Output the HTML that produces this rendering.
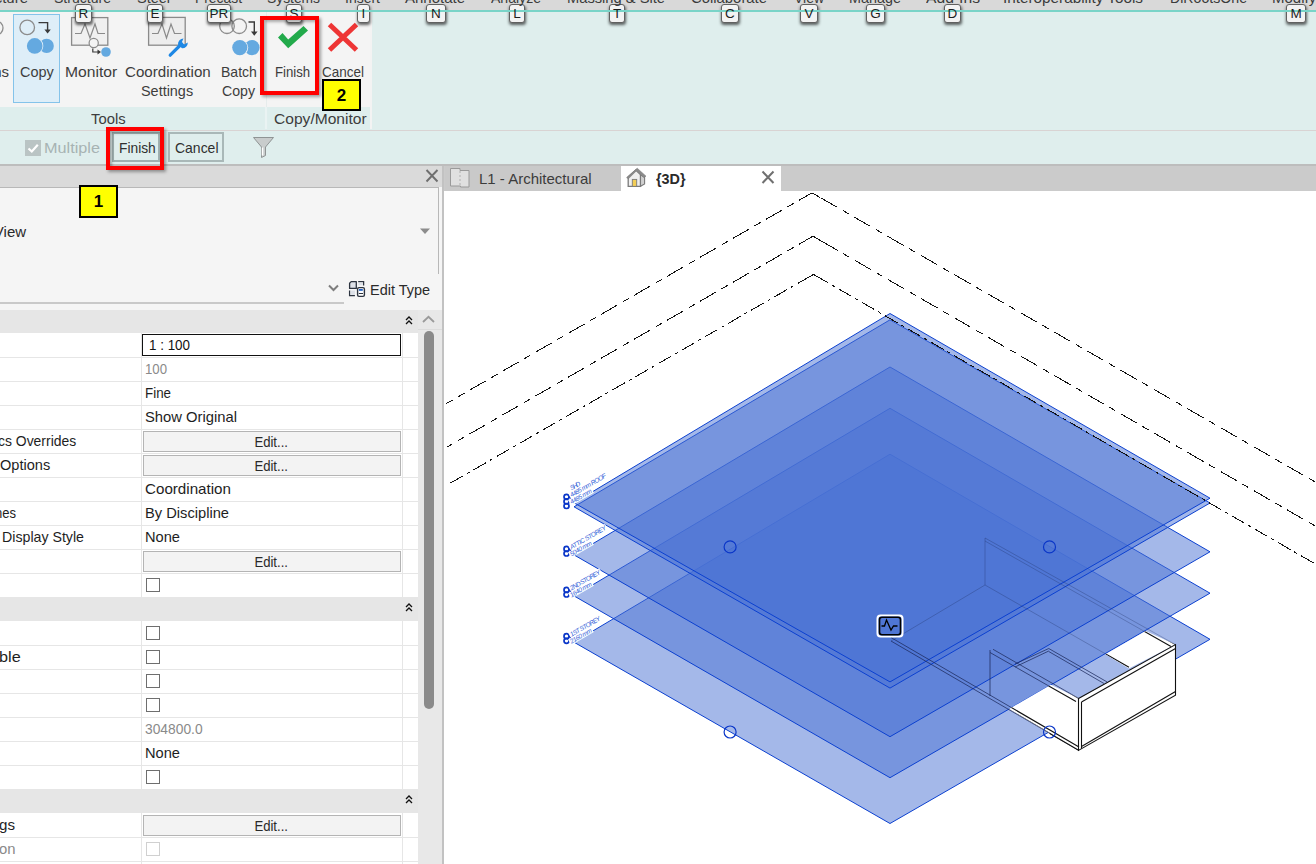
<!DOCTYPE html><html><head><meta charset='utf-8'><style>
html,body{margin:0;padding:0;width:1316px;height:864px;overflow:hidden;background:#fff;font-family:'Liberation Sans',sans-serif;}
.a{position:absolute;box-sizing:border-box;}
.t{position:absolute;white-space:pre;line-height:1;font-family:'Liberation Sans',sans-serif;z-index:7;}
.kt{position:absolute;box-sizing:border-box;z-index:4;background:#f3f3f3;border:1.6px solid #606060;border-radius:3px;box-shadow:0.5px 2px 3px rgba(0,0,0,.6);}
.rb{position:absolute;z-index:8;border:4px solid #ff0000;box-shadow:2px 2px 3px rgba(0,0,0,.35), inset 2px 2px 3px rgba(0,0,0,.3);box-sizing:content-box;}
.yb{position:absolute;z-index:9;background:#ffff00;border:2px solid #000;font:bold 17px/1 'Liberation Sans',sans-serif;color:#000;display:flex;align-items:center;justify-content:center;box-sizing:content-box;}
</style></head><body>
<div class='a' style='left:0px;top:0px;width:1316px;height:10px;background:#d9d9d9;'></div>
<div class='a' style='left:0px;top:12px;width:1316px;height:118px;background:#dfeeed;'></div>
<div class='a' style='left:0px;top:12px;width:371px;height:95px;background:#f4f4f4;'></div>
<div class='a' style='left:0px;top:107px;width:264px;height:22px;background:#deeeed;'></div>
<div class='a' style='left:268px;top:107px;width:102px;height:22px;background:#deeeed;'></div>
<div class='a' style='left:370px;top:12px;width:2px;height:117px;background:#f3f3f3;'></div>
<div class='a' style='left:265px;top:107px;width:2px;height:22px;background:#eaf3f3;'></div>
<div class='a' style='left:266px;top:12px;width:1px;height:95px;background:#e6ecec;'></div>
<div class='a' style='left:13px;top:14px;width:47px;height:89px;background:#deeef8;border:1px solid #84c3ea;'></div>
<svg class='a' style='left:0;top:0' width='372' height='110' viewBox='0 0 372 110'>
<defs>
<filter id='sh' x='-50%' y='-50%' width='200%' height='200%'><feGaussianBlur in='SourceAlpha' stdDeviation='1.3'/><feOffset dx='0.5' dy='1.2'/><feComponentTransfer><feFuncA type='linear' slope='0.8'/></feComponentTransfer><feMerge><feMergeNode/><feMergeNode in='SourceGraphic'/></feMerge></filter>
</defs>
<!-- partial icon at left -->
<circle cx='-4' cy='28' r='7' fill='none' stroke='#8e8e8e' stroke-width='1.3'/>
<!-- Copy icon -->
<circle cx='27.2' cy='27.4' r='7.3' fill='none' stroke='#8c8c8c' stroke-width='1.3'/>
<path d='M38.5 22.6 H47.6 V30' fill='none' stroke='#3a3a3a' stroke-width='1.4'/>
<path d='M44.4 29.4 L50.8 29.4 L47.6 33.6 Z' fill='#3a3a3a'/>
<circle cx='46.6' cy='45.9' r='7.2' fill='#64a9e0'/>
<circle cx='34.7' cy='45.9' r='8.6' fill='#deeef8'/>
<circle cx='34.7' cy='45.9' r='7.8' fill='#64a9e0'/>
<!-- Monitor icon -->
<rect x='71.6' y='17.6' width='36.2' height='27.6' fill='#f0f0f0' stroke='#8a8a8a' stroke-width='1.3'/>
<path d='M75 33.5 H81 L85 24 L90 38 L95 24 L98 33.5 H105' fill='none' stroke='#8a8a8a' stroke-width='1.2'/>
<circle cx='93.7' cy='43' r='4.6' fill='#f4f4f4' stroke='#8a8a8a' stroke-width='1.2'/>
<path d='M92.8 48.5 V52 H98.5' fill='none' stroke='#3a3a3a' stroke-width='1.2'/>
<path d='M97.5 49.6 L101 52 L97.5 54.4 Z' fill='#3a3a3a'/>
<circle cx='106' cy='52' r='4.8' fill='#64a9e0'/>
<!-- Coordination settings icon -->
<rect x='148.6' y='17.4' width='36.6' height='27.8' fill='#ededed' stroke='#8a8a8a' stroke-width='1.3'/>
<path d='M152 33.5 H158 L162 24 L166.5 38 L171 24 L174.5 33.5 H181.5' fill='none' stroke='#8a8a8a' stroke-width='1.2'/>
<path d='M170.2 55.2 L181.5 44' stroke='#1e88e5' stroke-width='3.2' stroke-linecap='round'/>
<path d='M178 44.5 A5.5 5.5 0 0 1 183.5 38.6 L181.8 42.3 L184.2 44.6 L187.8 42.6 A5.5 5.5 0 0 1 182 48.3 Z' fill='#1e88e5'/>
<!-- Batch copy icon -->
<circle cx='227' cy='26.2' r='7.3' fill='#f4f4f4' stroke='#8c8c8c' stroke-width='1.3'/>
<circle cx='239.2' cy='26.2' r='7.3' fill='none' stroke='#8c8c8c' stroke-width='1.3'/>
<path d='M248.5 22 H254.3 V32' fill='none' stroke='#3a3a3a' stroke-width='1.4'/>
<path d='M251 31.4 L257.6 31.4 L254.3 35.8 Z' fill='#3a3a3a'/>
<circle cx='252' cy='47.6' r='7.6' fill='#64a9e0'/>
<circle cx='239.8' cy='47.6' r='8.4' fill='#f4f4f4'/>
<circle cx='239.8' cy='47.6' r='7.6' fill='#64a9e0'/>
<!-- Finish check -->
<path d='M278 37.5 L282.5 33 L288.2 39.5 L303.5 26 L308 30.5 L288.2 48.2 Z' fill='#22aa4b'/>
<!-- Cancel X -->
<path d='M329.5 24.5 L356.5 50 M356.5 24.5 L329.5 50' stroke='#ee3535' stroke-width='5'/>
</svg>
<div class='kt' style='left:75px;top:4px;width:17px;height:19px'></div>
<div class='kt' style='left:147px;top:4px;width:16px;height:19px'></div>
<div class='kt' style='left:207px;top:4px;width:24px;height:19px'></div>
<div class='kt' style='left:286px;top:4px;width:16px;height:19px'></div>
<div class='kt' style='left:357px;top:4px;width:13px;height:19px'></div>
<div class='kt' style='left:426px;top:4px;width:20px;height:19px'></div>
<div class='kt' style='left:509px;top:4px;width:16px;height:19px'></div>
<div class='kt' style='left:609px;top:4px;width:16px;height:19px'></div>
<div class='kt' style='left:721px;top:4px;width:18px;height:19px'></div>
<div class='kt' style='left:800px;top:4px;width:18px;height:19px'></div>
<div class='kt' style='left:866px;top:4px;width:19px;height:19px'></div>
<div class='kt' style='left:944px;top:4px;width:17px;height:19px'></div>
<div class='kt' style='left:1286px;top:4px;width:20px;height:19px'></div>
<div class='a' style='left:0px;top:10px;width:1316px;height:2px;background:#79d4c8;z-index:5;'></div>
<div class='rb' style='left:260px;top:16px;width:51px;height:71px'></div>
<div class='yb' style='left:322px;top:79px;width:35px;height:28px'>2</div>
<div class='a' style='left:0px;top:130px;width:1316px;height:1px;background:#d9d3d3;'></div>
<div class='a' style='left:0px;top:131px;width:1316px;height:33px;background:#dfeeed;'></div>
<div class='a' style='left:0px;top:164px;width:1316px;height:2px;background:#bdbdbd;'></div>
<div class='a' style='left:25px;top:140px;width:16px;height:16px;background:#bac4c4;'></div>
<svg class='a' style='left:25px;top:140px' width='16' height='16'><path d='M3.5 8.5 L6.8 11.5 L12.8 4.8' fill='none' stroke='#fff' stroke-width='2.2'/></svg>
<div class='a' style='left:112px;top:132px;width:48px;height:30px;border:2px solid #9fb0b0;background:#dfeeed'></div>
<div class='a' style='left:168px;top:132px;width:56px;height:30px;border:2px solid #a9b8b8;background:#dfeeed'></div>
<div class='rb' style='left:106px;top:127px;width:50px;height:35px'></div>
<svg class='a' style='left:250px;top:134px' width='28' height='26'><path d='M3.5 3.5 H23.5 L15.5 13 V21.5 L11.5 23.5 V13 Z' fill='#c8cccc' stroke='#8f9494' stroke-width='1'/><path d='M12.5 13.5 V21.5' stroke='#fff' stroke-width='1.5'/></svg>
<div class='a' style='left:0px;top:166px;width:442px;height:698px;background:#f5f5f5;'></div>
<div class='a' style='left:0px;top:166px;width:442px;height:21px;background:#dadada;'></div>
<div class='a' style='left:442px;top:166px;width:2px;height:698px;background:#c2c2c2;'></div>
<svg class='a' style='left:424px;top:168px' width='16' height='16'><path d='M2.5 2 L13.5 13.5 M13.5 2 L2.5 13.5' stroke='#6e6e6e' stroke-width='1.9'/></svg>
<div class='a' style='left:-2px;top:187px;width:441px;height:87px;border:1px solid #b8b8b8;border-left:none;border-bottom:none;background:#f5f5f5'></div>
<svg class='a' style='left:418px;top:226px' width='14' height='10'><path d='M2 2.5 H12 L7 8 Z' fill='#8c8c8c'/></svg>
<svg class='a' style='left:327px;top:283px' width='13' height='10'><path d='M2 2.5 L6.5 7 L11 2.5' fill='none' stroke='#7e7e7e' stroke-width='2'/></svg>
<div class='a' style='left:0px;top:302px;width:344px;height:2px;background:#c9c9c9;'></div>
<svg class='a' style='left:347px;top:279px' width='20' height='20' viewBox='0 0 20 20'>
<path d='M4.2 2.6 H9.3 V9.4 H2.6 V4.2 Z' fill='#dde1e8' stroke='#2c3440' stroke-width='1.3' stroke-linejoin='round'/>
<path d='M11.2 2.6 H16.6 V6.4' fill='none' stroke='#2c3440' stroke-width='1.3'/>
<rect x='11.5' y='3.6' width='4.2' height='2.6' fill='#dde1e8'/>
<path d='M2.6 11.4 V16.6 H7.9' fill='none' stroke='#2c3440' stroke-width='1.3'/>
<rect x='3.6' y='11.6' width='4.4' height='4.2' fill='#dde1e8'/>
<rect x='10.6' y='8.6' width='6.8' height='8.8' rx='1.4' fill='#fff' stroke='#2c3440' stroke-width='1.4'/>
<rect x='11.9' y='10' width='3.9' height='1.8' fill='#1f5fc4'/>
<path d='M11.8 14.5 H16' stroke='#2c3440' stroke-width='1'/>
</svg>
<div class='a' style='left:417px;top:310px;width:25px;height:554px;background:#e8e8e8;'></div>
<div class='a' style='left:417px;top:329px;width:25px;height:1px;background:#dcdcdc;'></div>
<svg class='a' style='left:420px;top:313px' width='17' height='12'><path d='M3 9 L8.5 3.8 L14 9' fill='none' stroke='#9a9a9a' stroke-width='1.8'/></svg>
<div class='a' style='left:424px;top:331px;width:10px;height:378px;background:#8a8a8a;border-radius:5px'></div>
<div class='a' style='left:0px;top:310px;width:418px;height:24px;background:#e6e6e6;'></div>
<svg class='a' style='left:403px;top:313px' width='12' height='14'><path d='M3 7 L6 4 L9 7 M3 11 L6 8 L9 11' fill='none' stroke='#111' stroke-width='1.3'/></svg>
<div class='a' style='left:0px;top:333px;width:418px;height:24px;background:#ffffff;'></div>
<div class='a' style='left:141px;top:333px;width:1px;height:24px;background:#e6e6e6;'></div>
<div class='a' style='left:402px;top:333px;width:1px;height:24px;background:#e6e6e6;'></div>
<div class='a' style='left:142px;top:334px;width:259px;height:22px;border:1.5px solid #111;background:#fff'></div>
<div class='a' style='left:0px;top:357px;width:418px;height:24px;background:#ffffff;'></div>
<div class='a' style='left:0px;top:357px;width:418px;height:1px;background:#e6e6e6;'></div>
<div class='a' style='left:141px;top:357px;width:1px;height:24px;background:#e6e6e6;'></div>
<div class='a' style='left:402px;top:357px;width:1px;height:24px;background:#e6e6e6;'></div>
<div class='a' style='left:0px;top:381px;width:418px;height:24px;background:#ffffff;'></div>
<div class='a' style='left:0px;top:381px;width:418px;height:1px;background:#e6e6e6;'></div>
<div class='a' style='left:141px;top:381px;width:1px;height:24px;background:#e6e6e6;'></div>
<div class='a' style='left:402px;top:381px;width:1px;height:24px;background:#e6e6e6;'></div>
<div class='a' style='left:0px;top:405px;width:418px;height:24px;background:#ffffff;'></div>
<div class='a' style='left:0px;top:405px;width:418px;height:1px;background:#e6e6e6;'></div>
<div class='a' style='left:141px;top:405px;width:1px;height:24px;background:#e6e6e6;'></div>
<div class='a' style='left:402px;top:405px;width:1px;height:24px;background:#e6e6e6;'></div>
<div class='a' style='left:0px;top:429px;width:418px;height:24px;background:#ffffff;'></div>
<div class='a' style='left:0px;top:429px;width:418px;height:1px;background:#e6e6e6;'></div>
<div class='a' style='left:141px;top:429px;width:1px;height:24px;background:#e6e6e6;'></div>
<div class='a' style='left:402px;top:429px;width:1px;height:24px;background:#e6e6e6;'></div>
<div class='a' style='left:143px;top:431px;width:258px;height:21px;border:1px solid #b4b4b4;background:#f3f3f3'></div>
<div class='a' style='left:0px;top:453px;width:418px;height:24px;background:#ffffff;'></div>
<div class='a' style='left:0px;top:453px;width:418px;height:1px;background:#e6e6e6;'></div>
<div class='a' style='left:141px;top:453px;width:1px;height:24px;background:#e6e6e6;'></div>
<div class='a' style='left:402px;top:453px;width:1px;height:24px;background:#e6e6e6;'></div>
<div class='a' style='left:143px;top:455px;width:258px;height:21px;border:1px solid #b4b4b4;background:#f3f3f3'></div>
<div class='a' style='left:0px;top:477px;width:418px;height:24px;background:#ffffff;'></div>
<div class='a' style='left:0px;top:477px;width:418px;height:1px;background:#e6e6e6;'></div>
<div class='a' style='left:141px;top:477px;width:1px;height:24px;background:#e6e6e6;'></div>
<div class='a' style='left:402px;top:477px;width:1px;height:24px;background:#e6e6e6;'></div>
<div class='a' style='left:0px;top:501px;width:418px;height:24px;background:#ffffff;'></div>
<div class='a' style='left:0px;top:501px;width:418px;height:1px;background:#e6e6e6;'></div>
<div class='a' style='left:141px;top:501px;width:1px;height:24px;background:#e6e6e6;'></div>
<div class='a' style='left:402px;top:501px;width:1px;height:24px;background:#e6e6e6;'></div>
<div class='a' style='left:0px;top:525px;width:418px;height:24px;background:#ffffff;'></div>
<div class='a' style='left:0px;top:525px;width:418px;height:1px;background:#e6e6e6;'></div>
<div class='a' style='left:141px;top:525px;width:1px;height:24px;background:#e6e6e6;'></div>
<div class='a' style='left:402px;top:525px;width:1px;height:24px;background:#e6e6e6;'></div>
<div class='a' style='left:0px;top:549px;width:418px;height:24px;background:#ffffff;'></div>
<div class='a' style='left:0px;top:549px;width:418px;height:1px;background:#e6e6e6;'></div>
<div class='a' style='left:141px;top:549px;width:1px;height:24px;background:#e6e6e6;'></div>
<div class='a' style='left:402px;top:549px;width:1px;height:24px;background:#e6e6e6;'></div>
<div class='a' style='left:143px;top:551px;width:258px;height:21px;border:1px solid #b4b4b4;background:#f3f3f3'></div>
<div class='a' style='left:0px;top:573px;width:418px;height:24px;background:#ffffff;'></div>
<div class='a' style='left:0px;top:573px;width:418px;height:1px;background:#e6e6e6;'></div>
<div class='a' style='left:141px;top:573px;width:1px;height:24px;background:#e6e6e6;'></div>
<div class='a' style='left:402px;top:573px;width:1px;height:24px;background:#e6e6e6;'></div>
<div class='a' style='left:146px;top:578px;width:14px;height:14px;border:1px solid #6e6e6e;background:#fff'></div>
<div class='a' style='left:0px;top:597px;width:418px;height:24px;background:#e6e6e6;'></div>
<svg class='a' style='left:403px;top:600px' width='12' height='14'><path d='M3 7 L6 4 L9 7 M3 11 L6 8 L9 11' fill='none' stroke='#111' stroke-width='1.3'/></svg>
<div class='a' style='left:0px;top:621px;width:418px;height:24px;background:#ffffff;'></div>
<div class='a' style='left:141px;top:621px;width:1px;height:24px;background:#e6e6e6;'></div>
<div class='a' style='left:402px;top:621px;width:1px;height:24px;background:#e6e6e6;'></div>
<div class='a' style='left:146px;top:626px;width:14px;height:14px;border:1px solid #6e6e6e;background:#fff'></div>
<div class='a' style='left:0px;top:645px;width:418px;height:24px;background:#ffffff;'></div>
<div class='a' style='left:0px;top:645px;width:418px;height:1px;background:#e6e6e6;'></div>
<div class='a' style='left:141px;top:645px;width:1px;height:24px;background:#e6e6e6;'></div>
<div class='a' style='left:402px;top:645px;width:1px;height:24px;background:#e6e6e6;'></div>
<div class='a' style='left:146px;top:650px;width:14px;height:14px;border:1px solid #6e6e6e;background:#fff'></div>
<div class='a' style='left:0px;top:669px;width:418px;height:24px;background:#ffffff;'></div>
<div class='a' style='left:0px;top:669px;width:418px;height:1px;background:#e6e6e6;'></div>
<div class='a' style='left:141px;top:669px;width:1px;height:24px;background:#e6e6e6;'></div>
<div class='a' style='left:402px;top:669px;width:1px;height:24px;background:#e6e6e6;'></div>
<div class='a' style='left:146px;top:674px;width:14px;height:14px;border:1px solid #6e6e6e;background:#fff'></div>
<div class='a' style='left:0px;top:693px;width:418px;height:24px;background:#ffffff;'></div>
<div class='a' style='left:0px;top:693px;width:418px;height:1px;background:#e6e6e6;'></div>
<div class='a' style='left:141px;top:693px;width:1px;height:24px;background:#e6e6e6;'></div>
<div class='a' style='left:402px;top:693px;width:1px;height:24px;background:#e6e6e6;'></div>
<div class='a' style='left:146px;top:698px;width:14px;height:14px;border:1px solid #6e6e6e;background:#fff'></div>
<div class='a' style='left:0px;top:717px;width:418px;height:24px;background:#ffffff;'></div>
<div class='a' style='left:0px;top:717px;width:418px;height:1px;background:#e6e6e6;'></div>
<div class='a' style='left:141px;top:717px;width:1px;height:24px;background:#e6e6e6;'></div>
<div class='a' style='left:402px;top:717px;width:1px;height:24px;background:#e6e6e6;'></div>
<div class='a' style='left:0px;top:741px;width:418px;height:24px;background:#ffffff;'></div>
<div class='a' style='left:0px;top:741px;width:418px;height:1px;background:#e6e6e6;'></div>
<div class='a' style='left:141px;top:741px;width:1px;height:24px;background:#e6e6e6;'></div>
<div class='a' style='left:402px;top:741px;width:1px;height:24px;background:#e6e6e6;'></div>
<div class='a' style='left:0px;top:765px;width:418px;height:24px;background:#ffffff;'></div>
<div class='a' style='left:0px;top:765px;width:418px;height:1px;background:#e6e6e6;'></div>
<div class='a' style='left:141px;top:765px;width:1px;height:24px;background:#e6e6e6;'></div>
<div class='a' style='left:402px;top:765px;width:1px;height:24px;background:#e6e6e6;'></div>
<div class='a' style='left:146px;top:770px;width:14px;height:14px;border:1px solid #6e6e6e;background:#fff'></div>
<div class='a' style='left:0px;top:789px;width:418px;height:24px;background:#e6e6e6;'></div>
<svg class='a' style='left:403px;top:792px' width='12' height='14'><path d='M3 7 L6 4 L9 7 M3 11 L6 8 L9 11' fill='none' stroke='#111' stroke-width='1.3'/></svg>
<div class='a' style='left:0px;top:813px;width:418px;height:24px;background:#ffffff;'></div>
<div class='a' style='left:141px;top:813px;width:1px;height:24px;background:#e6e6e6;'></div>
<div class='a' style='left:402px;top:813px;width:1px;height:24px;background:#e6e6e6;'></div>
<div class='a' style='left:143px;top:815px;width:258px;height:21px;border:1px solid #b4b4b4;background:#f3f3f3'></div>
<div class='a' style='left:0px;top:837px;width:418px;height:24px;background:#ffffff;'></div>
<div class='a' style='left:0px;top:837px;width:418px;height:1px;background:#e6e6e6;'></div>
<div class='a' style='left:141px;top:837px;width:1px;height:24px;background:#e6e6e6;'></div>
<div class='a' style='left:402px;top:837px;width:1px;height:24px;background:#e6e6e6;'></div>
<div class='a' style='left:146px;top:842px;width:14px;height:14px;border:1px solid #d0d0d0;background:#fff'></div>
<div class='a' style='left:0px;top:861px;width:418px;height:24px;background:#ffffff;'></div>
<div class='a' style='left:0px;top:861px;width:418px;height:1px;background:#e6e6e6;'></div>
<div class='a' style='left:141px;top:861px;width:1px;height:24px;background:#e6e6e6;'></div>
<div class='a' style='left:402px;top:861px;width:1px;height:24px;background:#e6e6e6;'></div>
<div class='yb' style='left:79px;top:185px;width:35px;height:29px'>1</div>
<div class='a' style='left:444px;top:166px;width:872px;height:25px;background:#cbcbcb;'></div>
<div class='a' style='left:444px;top:191px;width:872px;height:673px;background:#ffffff;'></div>
<div class='a' style='left:445px;top:166px;width:176px;height:25px;background:#c9c9c9;'></div>
<div class='a' style='left:621px;top:166px;width:160px;height:25px;background:#ffffff;'></div>
<svg class='a' style='left:449px;top:167px' width='23' height='22' viewBox='0 0 23 22'>
<path d='M1.5 1.5 H11 V3.5 H20 V20 H11.5 V19 H1.5 Z' fill='#e0e0e0' stroke='#9a9a9a' stroke-width='1'/>
<path d='M11 4 V18.5' stroke='#b0b0b0' stroke-width='1' stroke-dasharray='2 2'/>
</svg>
<svg class='a' style='left:624px;top:165px' width='24' height='24' viewBox='624 165 24 24'>
<polygon points='628.2,177 636,170 640.5,174.5 640.5,186.3 628.2,186.3' fill='#efefef' stroke='#7a7a7a' stroke-width='1.3'/>
<polygon points='640.5,175 644.6,176.8 644.6,184 640.5,186.3' fill='#d0d0d0' stroke='#7a7a7a' stroke-width='1.1'/>
<polygon points='626.6,177.6 637.2,168.2 646,176.2 643.6,177.4 636.2,171 628.4,178.8' fill='#8a8a8a' stroke='#7a7a7a' stroke-width='0.6'/>
<rect x='632.3' y='179.4' width='4.4' height='7' fill='#f2cd55' stroke='#7a7a7a' stroke-width='0.9'/>
</svg>
<svg class='a' style='left:760px;top:170px' width='16' height='16'><path d='M2.5 1.5 L13.5 13 M13.5 1.5 L2.5 13' stroke='#707070' stroke-width='2'/></svg>
<svg class='a' style='left:444px;top:191px' width='872' height='673' viewBox='444 191 872 673'>
<polygon points='890,454.2 1210,639.3 890,823.5 574,642.2' fill='#4971d3' fill-opacity='0.5' stroke='#0b40d0' stroke-width='1'/>
<polygon points='890,408.3 1210,593.2 890,777.7 574,595.9' fill='#4971d3' fill-opacity='0.5' stroke='#0b40d0' stroke-width='1'/>
<polygon points='890,367.0 1210,551.8 890,736.7 574,554.9' fill='#4971d3' fill-opacity='0.5' stroke='#0b40d0' stroke-width='1'/>
<polygon points='890,319.8 1210,503.0 890,688.1 574,506.8' fill='#4971d3' fill-opacity='0.5' stroke='#0b40d0' stroke-width='1'/>
<polygon points='890,313.5 1210,498.2 890,681.9 574,502.8' fill='#4971d3' fill-opacity='0.5' stroke='#0b40d0' stroke-width='1'/>
<g fill='none' stroke='#1c2a5c' stroke-opacity='0.75' stroke-width='1'><path d='M990 650 V696 M993 649.3 L1079 698.6 M990 652.5 L1076 701.5'/><path d='M1015 664 L1048.75 648.5 M1015 667 L1048.75 651 M1048.75 648.5 L1107 681.9 M1048.75 651.5 L1104 683.5'/><path d='M891 641 L1079 750.4 M891 637.5 L1079 746.9'/></g>
<g fill='none' stroke='#1c2a5c' stroke-opacity='0.3' stroke-width='1'><path d='M985 538 V585 M985 538 L1175.5 644.6 M985 541 L1171 646.5 M985 585 L1129 667.3 M985 585 L891 641'/></g>
<g fill='none' stroke='#111' stroke-width='1' shape-rendering='crispEdges'>
<path d='M446.5 403.5 L812 192.8' stroke-dasharray='18.4 6.6 7 6' stroke-dashoffset='11.3'/>
<path d='M1316 482.5 L812 192.8' stroke-dasharray='18.6 6.4 7 6.4' stroke-dashoffset='23.7'/>
<path d='M812 192.8 L820 197.4'/>
<path d='M446.5 447.3 L813 236.2' stroke-dasharray='18.4 6.6 7 6' stroke-dashoffset='11.5'/>
<path d='M1316 526.5 L813 236.2' stroke-dasharray='18.6 6.4 7 6.4' stroke-dashoffset='23.7'/>
<path d='M813 236.2 L821 240.8'/>
<path d='M448 484.5 L813.5 274.4' stroke-dasharray='14.5 4.5 3 4.7' stroke-dashoffset='24'/>
<path d='M1316 564.4 L813.5 274.4' stroke-dasharray='14.4 4.6 3.5 4.2' stroke-dashoffset='24'/>
<path d='M803 280.5 L813.5 274.4 L822.5 279.6'/>
</g>
<clipPath id='wc'><polygon points='1079,698.6 1175.5,644.6 1175.5,695.3 1079,750.4'/><polygon points='1008.9,709 1050.9,684.8 1079,698.6 1079,750.4'/><polygon points='1105.4,654.3 1145.6,630.9 1175.5,644.6 1128.9,668.5'/><polygon points='1049.5,722 1079,738 1079,756 1049.5,740'/></clipPath>
<polygon points='1079,698.6 1175.5,644.6 1175.5,695.3 1079,750.4' fill='#fff'/>
<polygon points='1008.9,709 1050.9,684.8 1079,698.6 1079,750.4' fill='#fff'/>
<polygon points='1105.4,654.3 1145.6,630.9 1175.5,644.6 1128.9,668.5' fill='#fff'/>
<g fill='none' stroke='#111' stroke-width='1.1' clip-path='url(#wc)'><path d='M990 650 V696 M993 649.3 L1079 698.6 M990 652.5 L1076 701.5'/><path d='M1015 664 L1048.75 648.5 M1015 667 L1048.75 651 M1048.75 648.5 L1107 681.9 M1048.75 651.5 L1104 683.5'/><path d='M985 538 V585 M985 538 L1175.5 644.6 M985 541 L1171 646.5 M985 585 L1129 667.3 M985 585 L891 641'/><path d='M891 641 L1079 750.4 M891 637.5 L1079 746.9'/></g>
<g fill='none' stroke='#111' stroke-width='1.1'>
<path d='M1078.5 698.6 L1175.5 644.6 V695.3 L1078.5 750.4 Z'/>
<path d='M1081.5 702 L1175.5 648.6 M1081.5 702 V748.5 M1081.5 746.5 L1175.5 691.5'/>
</g>
<circle cx='730.1' cy='546.9' r='6' fill='none' stroke='#0a36c8' stroke-width='1.2'/>
<circle cx='1049.5' cy='546.9' r='6' fill='none' stroke='#0a36c8' stroke-width='1.2'/>
<circle cx='730.1' cy='732' r='6' fill='none' stroke='#0a36c8' stroke-width='1.2'/>
<circle cx='1049.5' cy='732' r='6' fill='none' stroke='#0a36c8' stroke-width='1.2'/>
<rect x='877.5' y='615.5' width='25' height='21' rx='3' fill='none' stroke='#fff' stroke-width='2'/>
<rect x='879.5' y='617.3' width='21' height='17.4' rx='2.5' fill='none' stroke='#000' stroke-width='1.6'/>
<path d='M881.5 626 H884.5 L886.5 620 L891 630 L893.5 626 H897.5' fill='none' stroke='#000' stroke-width='1.3'/>
<circle cx='566.5' cy='496.8' r='2.5' fill='none' stroke='#0a36c8' stroke-width='1.7'/>
<circle cx='566.5' cy='501.40000000000003' r='2.5' fill='none' stroke='#0a36c8' stroke-width='1.7'/>
<circle cx='566.5' cy='506.0' r='2.5' fill='none' stroke='#0a36c8' stroke-width='1.7'/>
<path d='M569 496.8 L573 500.8' stroke='#0a36c8' stroke-width='1.5'/>
<g transform='translate(571,491.3) rotate(-30)'><rect x='0' y='-6' width='12.899999999999999' height='6.5' fill='#fff'/><text x='1' y='-0.5' font-family='Liberation Sans' font-style='italic' font-size='6.5' fill='#3060d8' textLength='10.899999999999999'>SHD</text></g>
<g transform='translate(571,498.3) rotate(-30)'><rect x='0' y='-6' width='42.599999999999994' height='6.5' fill='#fff'/><text x='1' y='-0.5' font-family='Liberation Sans' font-style='italic' font-size='6.5' fill='#3060d8' textLength='40.599999999999994'>4485 mm ROOF</text></g>
<g transform='translate(571,505.3) rotate(-30)'><rect x='0' y='-6' width='26.099999999999998' height='6.5' fill='#fff'/><text x='1' y='-0.5' font-family='Liberation Sans' font-style='italic' font-size='6.5' fill='#3060d8' textLength='24.099999999999998'>4485 mm</text></g>
<circle cx='566.5' cy='548.9' r='2.5' fill='none' stroke='#0a36c8' stroke-width='1.7'/>
<circle cx='566.5' cy='553.5' r='2.5' fill='none' stroke='#0a36c8' stroke-width='1.7'/>
<path d='M569 548.9 L573 552.9' stroke='#0a36c8' stroke-width='1.5'/>
<g transform='translate(571,550.4) rotate(-30)'><rect x='0' y='-6' width='42.599999999999994' height='6.5' fill='#fff'/><text x='1' y='-0.5' font-family='Liberation Sans' font-style='italic' font-size='6.5' fill='#3060d8' textLength='40.599999999999994'>ATTIC STOREY</text></g>
<g transform='translate(571,557.4) rotate(-30)'><rect x='0' y='-6' width='26.099999999999998' height='6.5' fill='#fff'/><text x='1' y='-0.5' font-family='Liberation Sans' font-style='italic' font-size='6.5' fill='#3060d8' textLength='24.099999999999998'>5040 mm</text></g>
<circle cx='566.5' cy='589.9' r='2.5' fill='none' stroke='#0a36c8' stroke-width='1.7'/>
<circle cx='566.5' cy='594.5' r='2.5' fill='none' stroke='#0a36c8' stroke-width='1.7'/>
<path d='M569 589.9 L573 593.9' stroke='#0a36c8' stroke-width='1.5'/>
<g transform='translate(571,591.4) rotate(-30)'><rect x='0' y='-6' width='36.0' height='6.5' fill='#fff'/><text x='1' y='-0.5' font-family='Liberation Sans' font-style='italic' font-size='6.5' fill='#3060d8' textLength='34.0'>2ND STOREY</text></g>
<g transform='translate(571,598.4) rotate(-30)'><rect x='0' y='-6' width='26.099999999999998' height='6.5' fill='#fff'/><text x='1' y='-0.5' font-family='Liberation Sans' font-style='italic' font-size='6.5' fill='#3060d8' textLength='24.099999999999998'>1640 mm</text></g>
<circle cx='566.5' cy='636.2' r='2.5' fill='none' stroke='#0a36c8' stroke-width='1.7'/>
<circle cx='566.5' cy='640.8000000000001' r='2.5' fill='none' stroke='#0a36c8' stroke-width='1.7'/>
<path d='M569 636.2 L573 640.2' stroke='#0a36c8' stroke-width='1.5'/>
<g transform='translate(571,637.7) rotate(-30)'><rect x='0' y='-6' width='36.0' height='6.5' fill='#fff'/><text x='1' y='-0.5' font-family='Liberation Sans' font-style='italic' font-size='6.5' fill='#3060d8' textLength='34.0'>1ST STOREY</text></g>
<g transform='translate(571,644.7) rotate(-30)'><rect x='0' y='-6' width='26.099999999999998' height='6.5' fill='#fff'/><text x='1' y='-0.5' font-family='Liberation Sans' font-style='italic' font-size='6.5' fill='#3060d8' textLength='24.099999999999998'>2160 mm</text></g>
</svg>
<span class='t' style="left:-13.7px;top:-10px;font-size:15px;color:#3b3b3b;font-weight:normal;">ecture</span>
<span class='t' style="left:54.0px;top:-10px;font-size:15px;color:#3b3b3b;font-weight:normal;transform:scaleX(0.9366);transform-origin:left;">Structure</span>
<span class='t' style="left:137.0px;top:-10px;font-size:15px;color:#3b3b3b;font-weight:normal;transform:scaleX(0.9648);transform-origin:left;">Steel</span>
<span class='t' style="left:195.0px;top:-10px;font-size:15px;color:#3b3b3b;font-weight:normal;transform:scaleX(0.9241);transform-origin:left;">Precast</span>
<span class='t' style="left:267.0px;top:-10px;font-size:15px;color:#3b3b3b;font-weight:normal;transform:scaleX(0.9215);transform-origin:left;">Systems</span>
<span class='t' style="left:345.0px;top:-10px;font-size:15px;color:#3b3b3b;font-weight:normal;transform:scaleX(0.9329);transform-origin:left;">Insert</span>
<span class='t' style="left:405.0px;top:-10px;font-size:15px;color:#3b3b3b;font-weight:normal;">Annotate</span>
<span class='t' style="left:491.0px;top:-10px;font-size:15px;color:#3b3b3b;font-weight:normal;transform:scaleX(0.9368);transform-origin:left;">Analyze</span>
<span class='t' style="left:567.0px;top:-10px;font-size:15px;color:#3b3b3b;font-weight:normal;transform:scaleX(0.9795);transform-origin:left;">Massing &amp; Site</span>
<span class='t' style="left:691.0px;top:-10px;font-size:15px;color:#3b3b3b;font-weight:normal;transform:scaleX(0.9906);transform-origin:left;">Collaborate</span>
<span class='t' style="left:794.0px;top:-10px;font-size:15px;color:#3b3b3b;font-weight:normal;transform:scaleX(0.9302);transform-origin:left;">View</span>
<span class='t' style="left:849.0px;top:-10px;font-size:15px;color:#3b3b3b;font-weight:normal;transform:scaleX(0.9591);transform-origin:left;">Manage</span>
<span class='t' style="left:926.0px;top:-10px;font-size:15px;color:#3b3b3b;font-weight:normal;transform:scaleX(1.0444);transform-origin:left;">Add-Ins</span>
<span class='t' style="left:1003.0px;top:-10px;font-size:15px;color:#3b3b3b;font-weight:normal;transform:scaleX(1.0196);transform-origin:left;">Interoperability Tools</span>
<span class='t' style="left:1170.0px;top:-10px;font-size:15px;color:#3b3b3b;font-weight:normal;transform:scaleX(0.9424);transform-origin:left;">DiRootsOne</span>
<span class='t' style="left:1272.0px;top:-10px;font-size:15px;color:#3b3b3b;font-weight:normal;">Modify</span>
<span class='t' style="left:-6.8px;top:64px;font-size:15px;color:#3d3d3d;font-weight:normal;">ns</span>
<span class='t' style="left:20.0px;top:64px;font-size:15px;color:#3d3d3d;font-weight:normal;transform:scaleX(0.9649);transform-origin:left;">Copy</span>
<span class='t' style="left:64.8px;top:64px;font-size:15px;color:#3d3d3d;font-weight:normal;transform:scaleX(1.0433);transform-origin:left;">Monitor</span>
<span class='t' style="left:124.6px;top:64px;font-size:15px;color:#3d3d3d;font-weight:normal;transform:scaleX(1.0075);transform-origin:left;">Coordination</span>
<span class='t' style="left:141.4px;top:83.2px;font-size:15px;color:#3d3d3d;font-weight:normal;transform:scaleX(0.9612);transform-origin:left;">Settings</span>
<span class='t' style="left:220.7px;top:64px;font-size:15px;color:#3d3d3d;font-weight:normal;transform:scaleX(0.9359);transform-origin:left;">Batch</span>
<span class='t' style="left:222.4px;top:83.2px;font-size:15px;color:#3d3d3d;font-weight:normal;transform:scaleX(0.9420);transform-origin:left;">Copy</span>
<span class='t' style="left:274.8px;top:64px;font-size:15px;color:#3d3d3d;font-weight:normal;transform:scaleX(0.8797);transform-origin:left;">Finish</span>
<span class='t' style="left:322.0px;top:64px;font-size:15px;color:#3d3d3d;font-weight:normal;transform:scaleX(0.8993);transform-origin:left;">Cancel</span>
<span class='t' style="left:91.4px;top:110.7px;font-size:15px;color:#3d3d3d;font-weight:normal;transform:scaleX(0.9877);transform-origin:left;">Tools</span>
<span class='t' style="left:273.5px;top:110.7px;font-size:15px;color:#3d3d3d;font-weight:normal;transform:scaleX(1.0392);transform-origin:left;">Copy/Monitor</span>
<span class='t' style="left:78.6px;top:7px;font-size:13.5px;color:#1e1e1e;font-weight:normal;z-index:6;">R</span>
<span class='t' style="left:150.5px;top:7px;font-size:13.5px;color:#1e1e1e;font-weight:normal;z-index:6;">E</span>
<span class='t' style="left:209.6px;top:7px;font-size:13.5px;color:#1e1e1e;font-weight:normal;z-index:6;">PR</span>
<span class='t' style="left:289.5px;top:7px;font-size:13.5px;color:#1e1e1e;font-weight:normal;z-index:6;">S</span>
<span class='t' style="left:361.6px;top:7px;font-size:13.5px;color:#1e1e1e;font-weight:normal;z-index:6;">I</span>
<span class='t' style="left:431.1px;top:7px;font-size:13.5px;color:#1e1e1e;font-weight:normal;z-index:6;">N</span>
<span class='t' style="left:513.2px;top:7px;font-size:13.5px;color:#1e1e1e;font-weight:normal;z-index:6;">L</span>
<span class='t' style="left:612.9px;top:7px;font-size:13.5px;color:#1e1e1e;font-weight:normal;z-index:6;">T</span>
<span class='t' style="left:725.1px;top:7px;font-size:13.5px;color:#1e1e1e;font-weight:normal;z-index:6;">C</span>
<span class='t' style="left:804.5px;top:7px;font-size:13.5px;color:#1e1e1e;font-weight:normal;z-index:6;">V</span>
<span class='t' style="left:870.2px;top:7px;font-size:13.5px;color:#1e1e1e;font-weight:normal;z-index:6;">G</span>
<span class='t' style="left:947.6px;top:7px;font-size:13.5px;color:#1e1e1e;font-weight:normal;z-index:6;">D</span>
<span class='t' style="left:1290.4px;top:7px;font-size:13.5px;color:#1e1e1e;font-weight:normal;z-index:6;">M</span>
<span class='t' style="left:44.3px;top:140.4px;font-size:15px;color:#a7b3b3;font-weight:normal;transform:scaleX(1.0834);transform-origin:left;">Multiple</span>
<span class='t' style="left:118.7px;top:140.4px;font-size:15px;color:#2f2f2f;font-weight:normal;transform:scaleX(0.9196);transform-origin:left;">Finish</span>
<span class='t' style="left:174.7px;top:140.4px;font-size:15px;color:#2f2f2f;font-weight:normal;transform:scaleX(0.9314);transform-origin:left;">Cancel</span>
<span class='t' style="left:-6.2px;top:223.6px;font-size:15px;color:#2a2a2a;font-weight:normal;">View</span>
<span class='t' style="left:370.4px;top:282px;font-size:15px;color:#2a2a2a;font-weight:normal;transform:scaleX(0.9636);transform-origin:left;">Edit Type</span>
<span class='t' style="left:149.2px;top:337px;font-size:15px;color:#111;font-weight:normal;transform:scaleX(0.8937);transform-origin:left;">1 : 100</span>
<span class='t' style="left:144.7px;top:360.5px;font-size:15px;color:#8a8a8a;font-weight:normal;transform:scaleX(0.8789);transform-origin:left;">100</span>
<span class='t' style="left:144.7px;top:384.5px;font-size:15px;color:#1e1e1e;font-weight:normal;transform:scaleX(0.8908);transform-origin:left;">Fine</span>
<span class='t' style="left:144.7px;top:408.5px;font-size:15px;color:#1e1e1e;font-weight:normal;transform:scaleX(0.9851);transform-origin:left;">Show Original</span>
<span class='t' style="left:-2.5px;top:432.5px;font-size:15px;color:#1e1e1e;font-weight:normal;transform:scaleX(0.9289);transform-origin:left;">cs Overrides</span>
<span class='t' style="left:252.3px;top:433.8px;font-size:15px;color:#2a2a2a;font-weight:normal;transform:scaleX(0.8759);transform-origin:center;">Edit...</span>
<span class='t' style="left:-0.5px;top:456.5px;font-size:15px;color:#1e1e1e;font-weight:normal;transform:scaleX(0.9709);transform-origin:left;">Options</span>
<span class='t' style="left:252.3px;top:457.8px;font-size:15px;color:#2a2a2a;font-weight:normal;transform:scaleX(0.8759);transform-origin:center;">Edit...</span>
<span class='t' style="left:144.7px;top:480.5px;font-size:15px;color:#1e1e1e;font-weight:normal;transform:scaleX(1.0110);transform-origin:left;">Coordination</span>
<span class='t' style="left:-5.0px;top:504.5px;font-size:15px;color:#1e1e1e;font-weight:normal;transform:scaleX(0.8682);transform-origin:left;">nes</span>
<span class='t' style="left:144.7px;top:504.5px;font-size:15px;color:#1e1e1e;font-weight:normal;transform:scaleX(0.9782);transform-origin:left;">By Discipline</span>
<span class='t' style="left:2.0px;top:528.5px;font-size:15px;color:#1e1e1e;font-weight:normal;transform:scaleX(0.9458);transform-origin:left;">Display Style</span>
<span class='t' style="left:144.7px;top:528.5px;font-size:15px;color:#1e1e1e;font-weight:normal;transform:scaleX(0.9760);transform-origin:left;">None</span>
<span class='t' style="left:252.3px;top:553.8px;font-size:15px;color:#2a2a2a;font-weight:normal;transform:scaleX(0.8759);transform-origin:center;">Edit...</span>
<span class='t' style="left:-1.0px;top:648.5px;font-size:15px;color:#1e1e1e;font-weight:normal;transform:scaleX(1.0833);transform-origin:left;">ble</span>
<span class='t' style="left:144.7px;top:720.5px;font-size:15px;color:#8a8a8a;font-weight:normal;transform:scaleX(0.9204);transform-origin:left;">304800.0</span>
<span class='t' style="left:144.7px;top:744.5px;font-size:15px;color:#1e1e1e;font-weight:normal;transform:scaleX(0.9760);transform-origin:left;">None</span>
<span class='t' style="left:-1.0px;top:816.5px;font-size:15px;color:#1e1e1e;font-weight:normal;transform:scaleX(1.0099);transform-origin:left;">gs</span>
<span class='t' style="left:252.3px;top:817.8px;font-size:15px;color:#2a2a2a;font-weight:normal;transform:scaleX(0.8759);transform-origin:center;">Edit...</span>
<span class='t' style="left:-1.0px;top:840.5px;font-size:15px;color:#8a8a8a;font-weight:normal;transform:scaleX(0.9888);transform-origin:left;">on</span>
<span class='t' style="left:479.0px;top:170.6px;font-size:15px;color:#3c3c3c;font-weight:normal;">L1 - Architectural</span>
<span class='t' style="left:656.4px;top:170.6px;font-size:15px;color:#2a2a2a;font-weight:bold;transform:scaleX(0.9592);transform-origin:left;">{3D}</span>
</body></html>
